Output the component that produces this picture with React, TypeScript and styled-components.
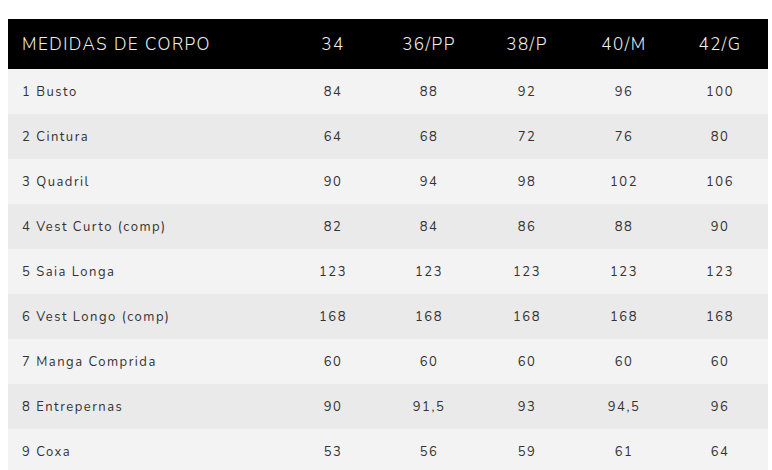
import React from 'react';
import styled, { createGlobalStyle } from 'styled-components';

const sizes = ['34', '36/PP', '38/P', '40/M', '42/G'];

const rows: { label: string; values: string[] }[] = [
  { label: '1 Busto', values: ['84', '88', '92', '96', '100'] },
  { label: '2 Cintura', values: ['64', '68', '72', '76', '80'] },
  { label: '3 Quadril', values: ['90', '94', '98', '102', '106'] },
  { label: '4 Vest Curto (comp)', values: ['82', '84', '86', '88', '90'] },
  { label: '5 Saia Longa', values: ['123', '123', '123', '123', '123'] },
  { label: '6 Vest Longo (comp)', values: ['168', '168', '168', '168', '168'] },
  { label: '7 Manga Comprida', values: ['60', '60', '60', '60', '60'] },
  { label: '8 Entrepernas', values: ['90', '91,5', '93', '94,5', '96'] },
  { label: '9 Coxa', values: ['53', '56', '59', '61', '64'] },
];

const GlobalStyle = createGlobalStyle`
  body {
    margin: 0;
    background: #fff;
    font-family: "Nunito", "Open Sans", "Lato", sans-serif;
  }
`;

const Page = styled.div`
  padding: 19px 4px 0 8px;
`;

const Table = styled.div`
  width: 760px;
  display: flex;
  flex-direction: column;
`;

const Row = styled.div<{ $tone: 'head' | 'light' | 'dark' }>`
  display: grid;
  grid-template-columns: 278px 94px 98px 98px 96px 96px;
  align-items: center;
  height: ${p => (p.$tone === 'head' ? '50px' : '45px')};
  background: ${p => (p.$tone === 'head' ? '#000' : p.$tone === 'light' ? '#f3f3f3' : '#eaeaea')};
  color: ${p => (p.$tone === 'head' ? '#f0f0f0' : '#333')};
  font-size: ${p => (p.$tone === 'head' ? '17px' : '13px')};
  font-weight: ${p => (p.$tone === 'head' ? 300 : 400)};
  letter-spacing: ${p => (p.$tone === 'head' ? '1.5px' : '1.5px')};
`;

const Label = styled.div`
  padding-left: 14px;
  white-space: nowrap;
`;

const Value = styled.div`
  text-align: center;
`;

export default function App() {
  return (
    <>
      <GlobalStyle />
      <Page>
        <Table>
          <Row $tone="head">
            <Label>MEDIDAS DE CORPO</Label>
            {sizes.map(s => (
              <Value key={s}>{s}</Value>
            ))}
          </Row>
          {rows.map((r, i) => (
            <Row key={r.label} $tone={i % 2 === 0 ? 'light' : 'dark'}>
              <Label>{r.label}</Label>
              {r.values.map((v, j) => (
                <Value key={j}>{v}</Value>
              ))}
            </Row>
          ))}
        </Table>
      </Page>
    </>
  );
}
